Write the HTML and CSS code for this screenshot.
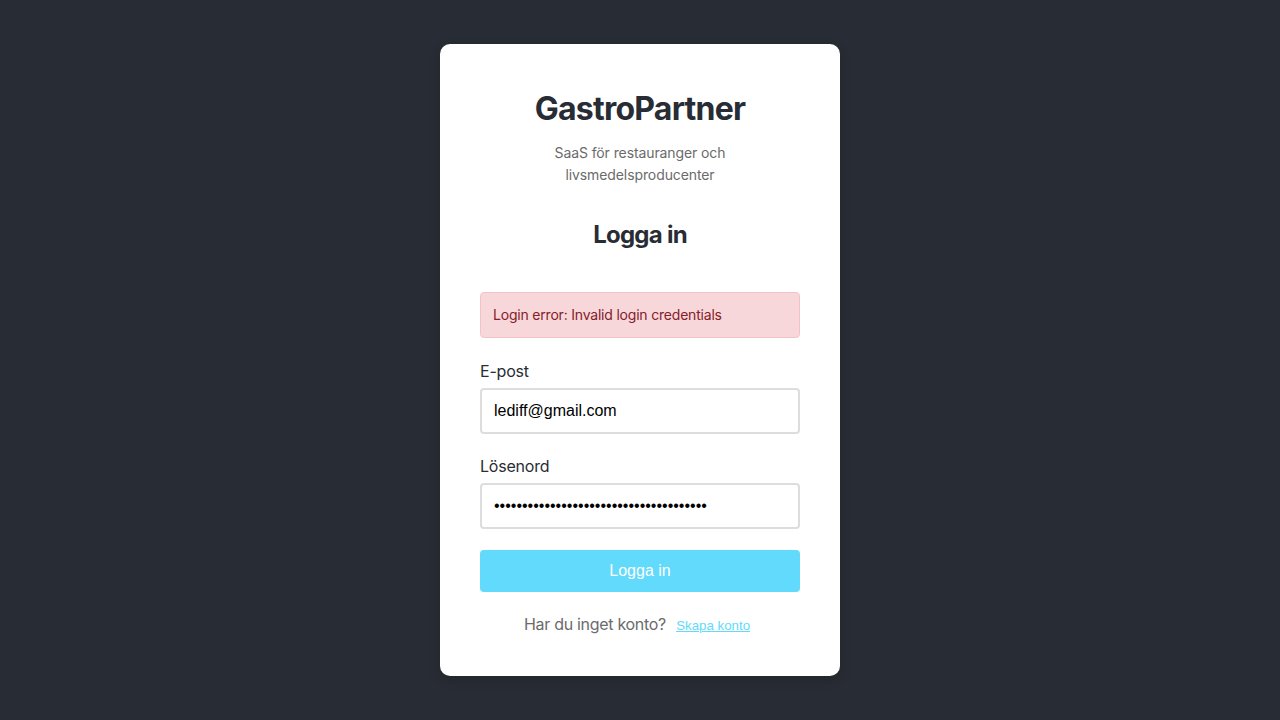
FILE: index.html
```html
<!DOCTYPE html>
<html lang="sv">
<head>
<meta charset="utf-8">
<title>GastroPartner – Logga in</title>
<link rel="stylesheet" href="styles.css">
</head>
<body>
<main class="page">
  <section class="card">
    <header class="brand">
      <h1 class="brand-title">GastroPartner</h1>
      <p class="brand-sub">SaaS för restauranger och livsmedelsproducenter</p>
    </header>
    <h2 class="form-title">Logga in</h2>
    <div class="alert">Login error: Invalid login credentials</div>
    <form class="form">
      <div class="field">
        <label class="label" for="email">E-post</label>
        <input class="input" id="email" type="email" value="lediff@gmail.com">
      </div>
      <div class="field">
        <label class="label" for="pw">Lösenord</label>
        <input class="input" id="pw" type="password" value="aaaaaaaaaaaaaaaaaaaaaaaaaaaaaaaaaaaaaa">
      </div>
      <button class="btn" type="button">Logga in</button>
    </form>
    <p class="footer-text">Har du inget konto? <a class="link" href="#">Skapa konto</a></p>
  </section>
</main>
</body>
</html>
```
FILE: styles.css
```css
* { box-sizing: border-box; }
html, body { margin: 0; padding: 0; }
body {
  background: #282c34;
  font-family: Inter, "Liberation Sans", sans-serif;
  color: #282c34;
  min-height: 720px;
}
.page {
  display: flex;
  justify-content: center;
  padding-top: 44px;
}
.card {
  width: 400px;
  height: 632px;
  background: #fff;
  border-radius: 10px;
  padding: 46px 40px 40px;
  box-shadow: 0 4px 12px rgba(0,0,0,0.15);
  display: flex;
  flex-direction: column;
}
.brand { text-align: center; }
.brand-title {
  margin: 0;
  font-size: 32px;
  line-height: 38px;
  font-weight: 700;
  letter-spacing: -0.75px;
  color: #282c34;
}
.brand-sub {
  margin: 14px auto 0;
  font-size: 14px;
  line-height: 22px;
  color: #6b6b6b;
  width: 200px;
  letter-spacing: -0.1px;
}
.form-title {
  margin: 34px 0 0;
  text-align: center;
  font-size: 24px;
  line-height: 29px;
  font-weight: 700;
  letter-spacing: -0.75px;
  color: #282c34;
}
.alert {
  margin-top: 43px;
  height: 46px;
  background: #f8d7da;
  border: 1px solid #f5c2c7;
  border-radius: 4px;
  color: #842029;
  font-size: 14px;
  line-height: 20px;
  letter-spacing: -0.2px;
  padding: 12px 12px;
}
.form {
  display: flex;
  flex-direction: column;
}
.field {
  margin-top: 24px;
  display: flex;
  flex-direction: column;
}
.field + .field { margin-top: 23px; }
.label {
  font-size: 16px;
  line-height: 19px;
  letter-spacing: -0.2px;
  color: #282c34;
  margin-bottom: 7px;
}
.input {
  height: 46px;
  border: 2px solid #ddd;
  border-radius: 4px;
  padding: 0 12px;
  font-family: "Liberation Sans", Arial, sans-serif;
  font-size: 16px;
  color: #000;
  background: #fff;
}
.btn {
  margin-top: 21px;
  height: 42px;
  border: none;
  border-radius: 4px;
  background: #61dafb;
  color: #fff;
  font-family: "Liberation Sans", Arial, sans-serif;
  font-size: 16px;
}
.footer-text {
  margin: 22px 0 0;
  text-align: center;
  font-size: 16px;
  line-height: 20px;
  letter-spacing: -0.3px;
  color: #6b6b6b;
}
.link {
  margin: 0 6px;
  font-family: "Liberation Sans", Arial, sans-serif;
  font-size: 13.3px;
  letter-spacing: 0;
  color: #61dafb;
  text-decoration: underline;
}
```
